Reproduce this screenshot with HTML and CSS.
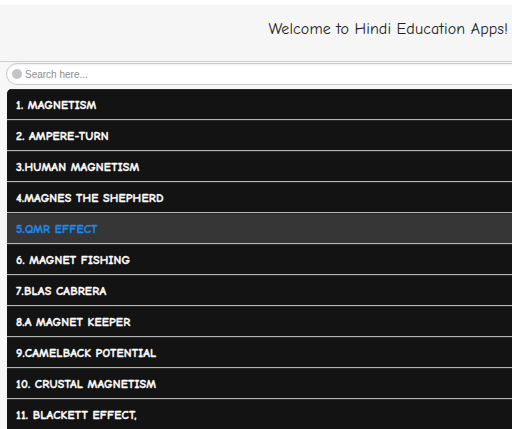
FILE: index.html
```html
<!DOCTYPE html>
<html lang="en">
<head>
<meta charset="utf-8">
<title>Hindi Education Apps</title>
<link rel="stylesheet" href="styles.css">
</head>
<body>
<div class="topstrip"></div>
<header class="header">
  <h1 class="title">Welcome to Hindi Education Apps!</h1>
</header>
<main class="content">
  <form class="search">
    <span class="search-icon"></span>
    <input class="search-input" type="text" placeholder="Search here...">
  </form>
  <ul class="list">
    <li class="item">1. MAGNETISM</li>
    <li class="item">2. AMPERE-TURN</li>
    <li class="item">3.HUMAN MAGNETISM</li>
    <li class="item">4.MAGNES THE SHEPHERD</li>
    <li class="item item-active">5.QMR EFFECT</li>
    <li class="item">6. MAGNET FISHING</li>
    <li class="item">7.BLAS CABRERA</li>
    <li class="item">8.A MAGNET KEEPER</li>
    <li class="item">9.CAMELBACK POTENTIAL</li>
    <li class="item">10. CRUSTAL MAGNETISM</li>
    <li class="item">11. BLACKETT EFFECT,</li>
  </ul>
</main>
</body>
</html>
```

FILE: styles.css
```css
html, body {
  margin: 0;
  padding: 0;
  background: #f7f7f7;
  overflow: hidden;
}

.topstrip {
  height: 5px;
  background: #ffffff;
}

.header {
  height: 57px;
  box-sizing: border-box;
  background: #f6f6f6;
  border-bottom: 1px solid #cfcfcf;
  display: flex;
  align-items: flex-start;
  justify-content: flex-end;
  padding: 14px 4px 0 0;
}

.title {
  margin: 0;
  font-family: "Comic Neue", "Lato", sans-serif;
  font-weight: 400;
  font-size: 16px;
  line-height: 20px;
  color: #222;
  letter-spacing: 0.1px;
}

.content {
  padding: 1px 0 0 6px;
  width: 530px;
}

.search {
  margin: 0;
  height: 20px;
  border: 1px solid #cccccc;
  border-radius: 11px;
  background: #ffffff;
  display: flex;
  align-items: center;
  padding-left: 5px;
  gap: 3px;
  box-shadow: inset 0 1px 2px rgba(0,0,0,0.08);
}

.search-icon {
  width: 10px;
  height: 10px;
  border-radius: 50%;
  background: #c4c4c4;
  flex: none;
}

.search-input {
  border: none;
  outline: none;
  background: transparent;
  font-family: "Liberation Sans", Arial, sans-serif;
  font-size: 10px;
  color: #333;
  padding: 0;
  flex: 1;
}

.search-input::placeholder {
  color: #8e8e8e;
}

.list {
  list-style: none;
  margin: 4px 0 0 1px;
  padding: 0;
  background: #111111;
  border-radius: 5px 0 0 0;
  overflow: hidden;
}

.item {
  height: 29px;
  line-height: 30px;
  padding-left: 9px;
  background: #131313;
  border-top: 1px solid #2a2a2a;
  border-bottom: 1px solid #b5b5b5;
  font-family: "Comic Neue", "DejaVu Sans", sans-serif;
  font-weight: 700;
  font-size: 12px;
  color: #ffffff;
  letter-spacing: 0.2px;
  -webkit-text-stroke: 0.35px currentColor;
}

.item-active {
  background: #363636;
  color: #1e88e5;
}
```
